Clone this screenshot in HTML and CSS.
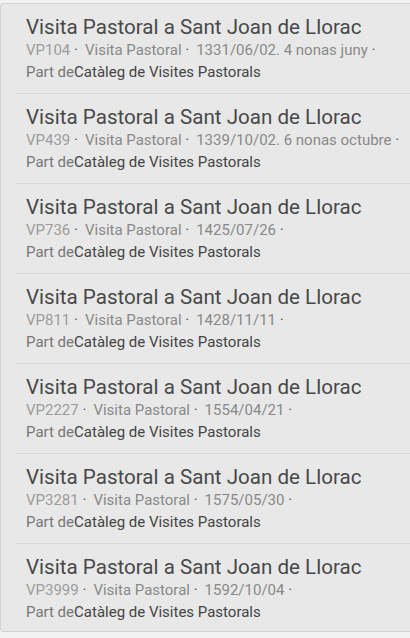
FILE: index.html
```html
<!DOCTYPE html>
<html lang="ca">
<head>
    <meta charset="UTF-8">
    <title>Visites Pastorals</title>
    <link rel="stylesheet" href="styles.css">
</head>
<body>
<div id="result_list">
    <ul class="result-items">
        <li class="result-item">
            <div class="item-title">Visita Pastoral a Sant Joan de Llorac</div>
            <div class="item-meta"><span class="meta-field item-code">VP104 <i>·</i></span><span class="meta-field">Visita Pastoral <i>·</i></span><span class="meta-field">1331/06/02. 4 nonas juny <i>·</i></span></div>
            <div class="item-part">Part de<span class="item-parent">Catàleg de Visites Pastorals</span></div>
        </li>
        <li class="result-item">
            <div class="item-title">Visita Pastoral a Sant Joan de Llorac</div>
            <div class="item-meta"><span class="meta-field item-code">VP439 <i>·</i></span><span class="meta-field">Visita Pastoral <i>·</i></span><span class="meta-field">1339/10/02. 6 nonas octubre <i>·</i></span></div>
            <div class="item-part">Part de<span class="item-parent">Catàleg de Visites Pastorals</span></div>
        </li>
        <li class="result-item">
            <div class="item-title">Visita Pastoral a Sant Joan de Llorac</div>
            <div class="item-meta"><span class="meta-field item-code">VP736 <i>·</i></span><span class="meta-field">Visita Pastoral <i>·</i></span><span class="meta-field">1425/07/26 <i>·</i></span></div>
            <div class="item-part">Part de<span class="item-parent">Catàleg de Visites Pastorals</span></div>
        </li>
        <li class="result-item">
            <div class="item-title">Visita Pastoral a Sant Joan de Llorac</div>
            <div class="item-meta"><span class="meta-field item-code">VP811 <i>·</i></span><span class="meta-field">Visita Pastoral <i>·</i></span><span class="meta-field">1428/11/11 <i>·</i></span></div>
            <div class="item-part">Part de<span class="item-parent">Catàleg de Visites Pastorals</span></div>
        </li>
        <li class="result-item">
            <div class="item-title">Visita Pastoral a Sant Joan de Llorac</div>
            <div class="item-meta"><span class="meta-field item-code">VP2227 <i>·</i></span><span class="meta-field">Visita Pastoral <i>·</i></span><span class="meta-field">1554/04/21 <i>·</i></span></div>
            <div class="item-part">Part de<span class="item-parent">Catàleg de Visites Pastorals</span></div>
        </li>
        <li class="result-item">
            <div class="item-title">Visita Pastoral a Sant Joan de Llorac</div>
            <div class="item-meta"><span class="meta-field item-code">VP3281 <i>·</i></span><span class="meta-field">Visita Pastoral <i>·</i></span><span class="meta-field">1575/05/30 <i>·</i></span></div>
            <div class="item-part">Part de<span class="item-parent">Catàleg de Visites Pastorals</span></div>
        </li>
        <li class="result-item">
            <div class="item-title">Visita Pastoral a Sant Joan de Llorac</div>
            <div class="item-meta"><span class="meta-field item-code">VP3999 <i>·</i></span><span class="meta-field">Visita Pastoral <i>·</i></span><span class="meta-field">1592/10/04 <i>·</i></span></div>
            <div class="item-part">Part de<span class="item-parent">Catàleg de Visites Pastorals</span></div>
        </li>
    </ul>
</div>
</body>
</html>
```

FILE: styles.css
```css
*{
    margin: 0;
    padding: 0;
    box-sizing: border-box;
}
body{
    background: #f2f2f2;
    font-family: Roboto, "Noto Sans", sans-serif;
    overflow: hidden;
}
#result_list{
    margin-top: 3px;
    width: 420px;
    background: #e8e8e8;
    border: 1px solid #d2d2d2;
    border-radius: 3px 0 0 3px;
}
.result-items{
    list-style: none;
}
.result-item{
    height: 90px;
    margin-left: 14px;
    padding: 11px 0 0 11px;
    border-bottom: 1px solid #d8d8d8;
}
.result-item:last-child{
    height: 87px;
    border-bottom: none;
}
.item-title{
    font-size: 20.6px;
    line-height: 24px;
    color: #484848;
    white-space: nowrap;
}
.item-meta{
    font-size: 15px;
    line-height: 22px;
    color: #888;
    white-space: nowrap;
}
.meta-field{
    margin-right: 7px;
}
.meta-field>i{
    font-style: normal;
    color: #555;
}
.item-code{
    color: #9c9c9c;
}
.item-part{
    font-size: 15px;
    line-height: 22px;
    color: #777;
}
.item-parent{
    color: #444;
}
```
